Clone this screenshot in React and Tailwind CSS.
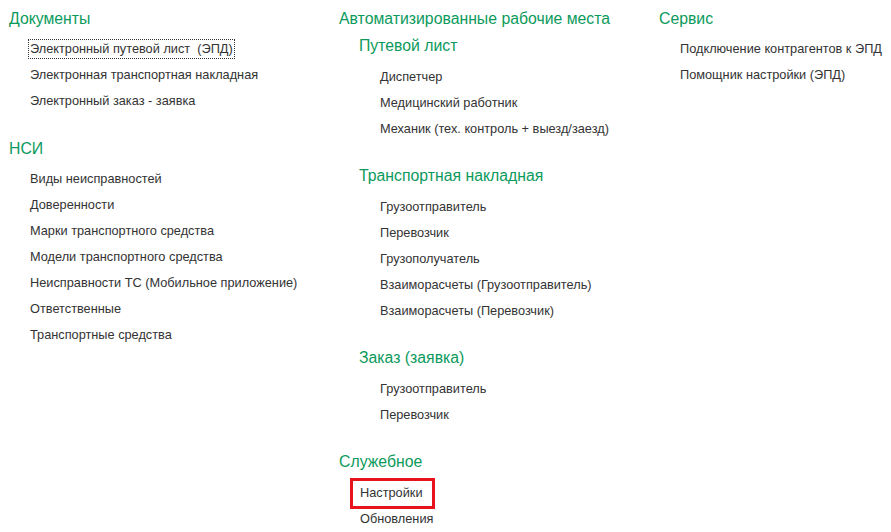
const GREEN = "text-[#0c9a5c]";

function Header({ children, indent = false }) {
  return (
    <div className={`h-5 text-[15.8px] leading-5 ${GREEN} ${indent ? "pl-5" : ""}`}>{children}</div>
  );
}

function Item({ children, focused, marked, indent = "pl-[21px]" }) {
  return (
    <div className={`h-[26px] ${indent} flex items-center`}>
      <span
        className={`relative whitespace-pre text-[12.75px] leading-4 text-[#333333] ${
          focused ? "outline outline-1 outline-dotted outline-[#333] outline-offset-[1px]" : ""
        }`}
      >
        {marked && <span className="absolute -left-[10px] -right-[12px] -top-[7px] -bottom-[8px] border-[3px] border-[#e8141b]" />}
        {children}
      </span>
    </div>
  );
}

function Group({ title, items, className = "", focusFirst, sub }) {
  return (
    <div className={className}>
      <Header indent={sub}>{title}</Header>
      <div className={sub ? "mt-[8px]" : "mt-[7px]"}>
        {items.map((t, i) => (
          <Item key={t} focused={focusFirst && i === 0} indent={sub ? "pl-[41px]" : "pl-[21px]"}>
            {t}
          </Item>
        ))}
      </div>
    </div>
  );
}

export default function App() {
  return (
    <div
      className="w-[891px] h-[532px] overflow-hidden bg-white flex pt-[9px]"
      style={{ fontFamily: '"Liberation Sans", Arial, sans-serif' }}
    >
      <div className="w-[330px] pl-[9px]">
        <Group
          title="Документы"
          focusFirst
          items={["Электронный путевой лист  (ЭПД)", "Электронная транспортная накладная", "Электронный заказ - заявка"]}
        />
        <Group
          className="mt-[25px]"
          title="НСИ"
          items={[
            "Виды неисправностей",
            "Доверенности",
            "Марки транспортного средства",
            "Модели транспортного средства",
            "Неисправности ТС (Мобильное приложение)",
            "Ответственные",
            "Транспортные средства",
          ]}
        />
      </div>
      <div className="w-[320px] pl-[9px]">
        <Header>Автоматизированные рабочие места</Header>
        <Group
          className="mt-[7px]"
          sub
          title="Путевой лист"
          items={["Диспетчер", "Медицинский работник", "Механик (тех. контроль + выезд/заезд)"]}
        />
        <Group
          className="mt-[24px]"
          sub
          title="Транспортная накладная"
          items={["Грузоотправитель", "Перевозчик", "Грузополучатель", "Взаиморасчеты (Грузоотправитель)", "Взаиморасчеты (Перевозчик)"]}
        />
        <Group className="mt-[24px]" sub title="Заказ (заявка)" items={["Грузоотправитель", "Перевозчик"]} />
        <div className="mt-[24px]">
          <Header>Служебное</Header>
          <div className="mt-[8px]">
            <Item marked>Настройки</Item>
            <Item>Обновления</Item>
          </div>
        </div>
      </div>
      <div className="flex-1 pl-[9px]">
        <Group
          title="Сервис"
          items={["Подключение контрагентов к ЭПД", "Помощник настройки (ЭПД)"]}
        />
      </div>
    </div>
  );
}
